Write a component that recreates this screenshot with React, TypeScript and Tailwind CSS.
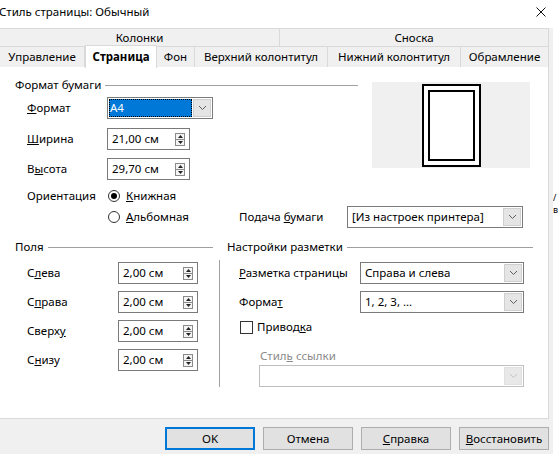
import type { ReactNode } from "react";

const Chevron = ({ light }: { light?: boolean }) => (
  <svg width="9" height="6" viewBox="0 0 9 6">
    <path d="M1 1 L4.5 4.5 L8 1" fill="none" stroke={light ? "#c4c4c4" : "#606060"} strokeWidth="1" />
  </svg>
);

const Header = ({ title }: { title: string }) => (
  <div className="flex items-center h-4">
    <span>{title}</span>
    <div className="flex-1 h-px bg-[#a0a0a0] ml-[4px]" />
  </div>
);

const Select = ({ value, w, selected, disabled }: { value: string; w: string; selected?: boolean; disabled?: boolean }) => (
  <div className={`flex h-[22px] bg-white border ${disabled ? "border-[#bfbfbf]" : "border-[#7a7a7a]"} ${w}`}>
    <div className="flex-1 flex items-center p-px">
      {selected ? (
        <div className="w-full h-full bg-[#0078d7] text-white flex items-center pl-[1px] outline-1 outline-dotted outline-[#000] -outline-offset-1">
          {value}
        </div>
      ) : (
        <span className="pl-[3px]">{value}</span>
      )}
    </div>
    <div className={`w-[18px] h-[18px] mt-px mr-px flex items-center justify-center border ${disabled ? "bg-[#e8e8e8] border-[#e0e0e0]" : "bg-[#e5e5e5] border-[#cfcfcf]"}`}>
      <Chevron light={disabled} />
    </div>
  </div>
);

const Spin = ({ value, w }: { value: string; w: string }) => (
  <div className={`flex items-center h-[22px] bg-white border border-[#7a7a7a] ${w}`}>
    <span className="flex-1 pl-[4px]">{value}</span>
    <div className="w-[10px] h-[13px] mr-[4px] border border-[#8a8a8a] bg-[#f4f4f4] flex flex-col">
      <div className="flex-1 flex items-center justify-center border-b border-[#8a8a8a]">
        <svg width="5" height="3" viewBox="0 0 5 3"><path d="M0 3 L2.5 0 L5 3 Z" fill="#222" /></svg>
      </div>
      <div className="flex-1 flex items-center justify-center">
        <svg width="5" height="3" viewBox="0 0 5 3"><path d="M0 0 L2.5 3 L5 0 Z" fill="#222" /></svg>
      </div>
    </div>
  </div>
);

const Radio = ({ checked }: { checked?: boolean }) => (
  <div className="w-[12px] h-[12px] rounded-full border border-[#333] bg-white flex items-center justify-center">
    {checked && <div className="w-[6px] h-[6px] rounded-full bg-[#000]" />}
  </div>
);

const Btn = ({ children, primary }: { children: ReactNode; primary?: boolean }) => (
  <div
    className={`w-[90px] h-[23px] flex items-center justify-center bg-[#e1e1e1] ${
      primary ? "border-2 border-[#0078d7]" : "border border-[#adadad]"
    }`}
  >
    <span>{children}</span>
  </div>
);

const MarginRow = ({ label }: { label: ReactNode }) => (
  <div className="flex items-center h-[22px] mt-[7px] pl-[12px]">
    <span className="w-[91px]">{label}</span>
    <Spin value="2,00 см" w="w-[80px]" />
  </div>
);

export default function App() {
  const row2 = [
    { t: "Управление", w: "w-[85px]" },
    { t: "Страница", w: "w-[72px]", on: true },
    { t: "Фон", w: "w-[38px]" },
    { t: "Верхний колонтитул", w: "w-[133px]" },
    { t: "Нижний колонтитул", w: "w-[133px]" },
    { t: "Обрамление", w: "w-[88px]" },
  ];

  return (
    <div className="w-[559px] h-[454px] flex overflow-hidden bg-white text-[11.5px] text-black font-['Noto_Sans',sans-serif] leading-4">
      <div className="w-[553px] flex flex-col bg-[#f0f0f0]">
        {/* title */}
        <div className="h-[28px] bg-white flex items-start justify-between pt-[4px]">
          <span className="ml-[-1px]">Стиль страницы: Обычный</span>
          <svg width="10" height="10" viewBox="0 0 10 10" className="mr-[7px] mt-[3px]">
            <path d="M0.5 0.5 L9.5 9.5 M9.5 0.5 L0.5 9.5" stroke="#111" strokeWidth="1" />
          </svg>
        </div>

        {/* tabs */}
        <div className="w-[549px]">
          <div className="flex h-[18px] border-t border-[#d9d9d9]">
            <div className="w-[280px] flex items-center justify-center border-r border-[#d9d9d9]">Колонки</div>
            <div className="flex-1 flex items-center justify-center border-r border-[#d9d9d9]">Сноска</div>
          </div>
          <div className="flex h-[21px] border-t border-[#d9d9d9]">
            {row2.map((tab) => (
              <div
                key={tab.t}
                className={`${tab.w} flex items-center justify-center border-r border-[#d9d9d9] ${
                  tab.on ? "bg-white font-bold -mt-[2px] h-[23px] border-l border-t relative" : ""
                }`}
              >
                {tab.t}
              </div>
            ))}
          </div>
        </div>

        {/* page content */}
        <div className="w-[549px] h-[352px] bg-white border-r border-b border-[#d9d9d9] pl-[15px] pt-[10px]">
          <div className="flex">
            <div className="w-[343px]">
              <Header title="Формат бумаги" />
              <div className="flex items-center h-[22px] mt-[4px] pl-[12px]">
                <span className="w-[80px]"><u>Ф</u>ормат</span>
                <Select value="A4" w="w-[106px]" selected />
              </div>
              <div className="flex items-center h-[22px] mt-[9px] pl-[12px]">
                <span className="w-[80px]"><u>Ш</u>ирина</span>
                <Spin value="21,00 см" w="w-[83px]" />
              </div>
              <div className="flex items-center h-[22px] mt-[8px] pl-[12px]">
                <span className="w-[80px]">В<u>ы</u>сота</span>
                <Spin value="29,70 см" w="w-[83px]" />
              </div>
            </div>
            <div className="ml-[14px] mt-[5px] w-[158px] h-[86px] bg-[#f0f0f0] flex justify-center pt-[2px]">
              <div className="w-[59px] h-[83px] border-2 border-black bg-white p-[4px]">
                <div className="w-full h-full border-2 border-black" />
              </div>
            </div>
          </div>

          <div className="flex items-center h-[21px] mt-[5px] pl-[12px]">
            <span className="w-[81px]">Ориентация</span>
            <Radio checked />
            <span className="ml-[6px]"><u>К</u>нижная</span>
          </div>
          <div className="flex items-center h-[22px]">
            <div className="w-[93px]" />
            <div className="w-[131px] flex items-center">
              <Radio />
              <span className="ml-[6px]"><u>А</u>льбомная</span>
            </div>
            <span className="w-[108px]">Подача <u>б</u>умаги</span>
            <Select value="[Из настроек принтера]" w="w-[176px]" />
          </div>

          <div className="flex mt-[11px]">
            <div className="w-[198px]">
              <Header title="Поля" />
              <MarginRow label={<>С<u>л</u>ева</>} />
              <MarginRow label={<>С<u>п</u>рава</>} />
              <MarginRow label={<>Сверх<u>у</u></>} />
              <MarginRow label={<>С<u>н</u>изу</>} />
            </div>
            <div className="ml-[6px] w-[314px]">
              <div className="pl-[8px]">
                <Header title="Настройки разметки" />
              </div>
              <div className="mt-[5px] pt-[2px] border-l border-[#a0a0a0] pl-[19px] h-[127px]">
                <div className="flex items-center h-[22px]">
                  <span className="w-[121px]"><u>Р</u>азметка страницы</span>
                  <Select value="Справа и слева" w="w-[164px]" />
                </div>
                <div className="flex items-center h-[22px] mt-[7px]">
                  <span className="w-[121px]">Форма<u>т</u></span>
                  <Select value="1, 2, 3, ..." w="w-[164px]" />
                </div>
                <div className="flex items-center h-[16px] mt-[6px] pl-px">
                  <div className="w-[13px] h-[13px] border border-[#333] bg-white" />
                  <span className="ml-[4px]">Привод<u>к</u>а</span>
                </div>
                <div className="pl-[20px] mt-[13px]">
                  <div className="h-[16px] flex items-center text-[#8a8a8a] pl-px">
                    <span>Стил<u>ь</u> ссылки</span>
                  </div>
                  <div className="mt-px">
                    <Select value="" w="w-[265px]" disabled />
                  </div>
                </div>
              </div>
            </div>
          </div>
        </div>

        {/* buttons */}
        <div className="flex-1 flex justify-end items-start gap-[8px] pt-[8px] pr-[4px]">
          <Btn primary>OK</Btn>
          <Btn>Отмена</Btn>
          <Btn><u>С</u>правка</Btn>
          <Btn><u>В</u>осстановить</Btn>
        </div>
      </div>
      <div className="w-px bg-[#3a8ad6]" />
      <div className="flex-1 bg-white pt-[192px] text-[9px] leading-[12px] ml-[-1px] overflow-hidden">
        <div className="h-[12px]">/</div>
        <div className="h-[12px]">в</div>
      </div>
    </div>
  );
}
